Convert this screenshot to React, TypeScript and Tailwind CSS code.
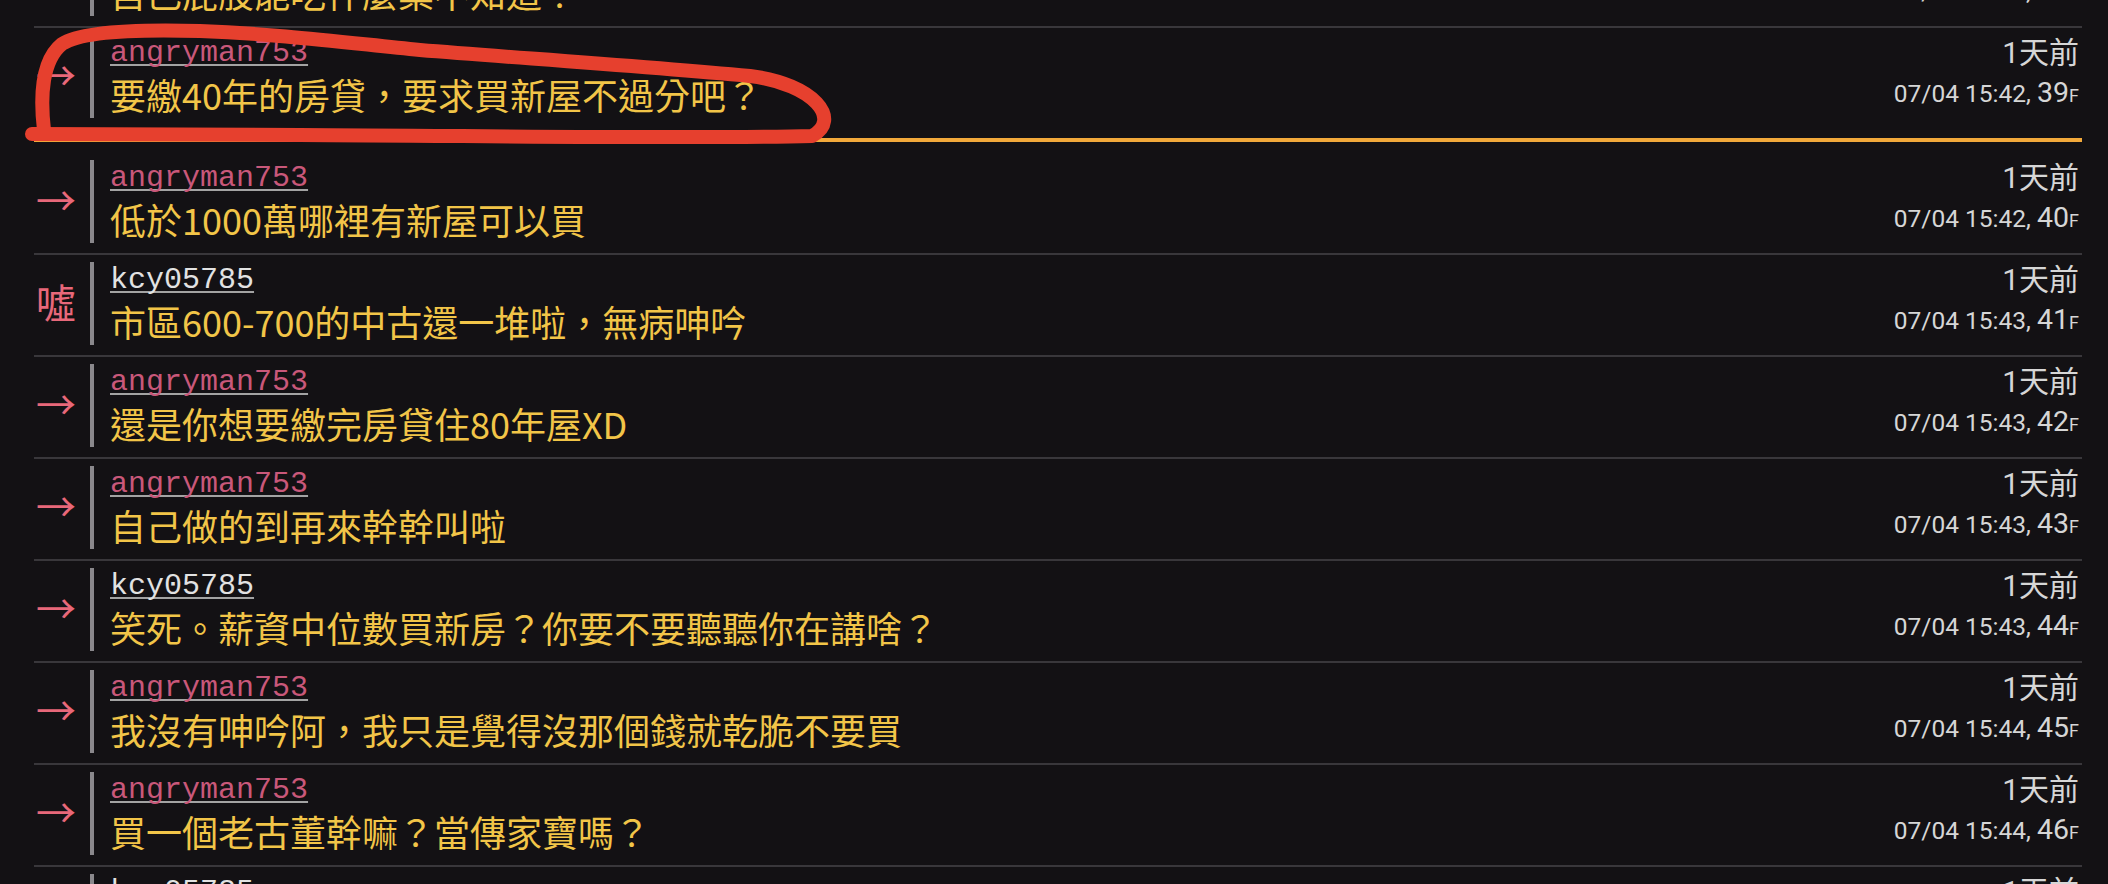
import React from 'react'

type Comment = {
  floor: number
  tag: '→' | '噓'
  user: string
  text: string
  time: string
}

const comments: Comment[] = [
  { floor: 38, tag: '→', user: 'angryman753', text: '自己屁股能吃什麼藥不知道？', time: '07/04 15:41' },
  { floor: 39, tag: '→', user: 'angryman753', text: '要繳40年的房貸，要求買新屋不過分吧？', time: '07/04 15:42' },
  { floor: 40, tag: '→', user: 'angryman753', text: '低於1000萬哪裡有新屋可以買', time: '07/04 15:42' },
  { floor: 41, tag: '噓', user: 'kcy05785', text: '市區600-700的中古還一堆啦，無病呻吟', time: '07/04 15:43' },
  { floor: 42, tag: '→', user: 'angryman753', text: '還是你想要繳完房貸住80年屋XD', time: '07/04 15:43' },
  { floor: 43, tag: '→', user: 'angryman753', text: '自己做的到再來幹幹叫啦', time: '07/04 15:43' },
  { floor: 44, tag: '→', user: 'kcy05785', text: '笑死。薪資中位數買新房？你要不要聽聽你在講啥？', time: '07/04 15:43' },
  { floor: 45, tag: '→', user: 'angryman753', text: '我沒有呻吟阿，我只是覺得沒那個錢就乾脆不要買', time: '07/04 15:44' },
  { floor: 46, tag: '→', user: 'angryman753', text: '買一個老古董幹嘛？當傳家寶嗎？', time: '07/04 15:44' },
  { floor: 47, tag: '→', user: 'kcy05785', text: '中古屋也是可以住啊', time: '07/04 15:45' },
]

// floor after which the "last read" marker is shown
const READ_MARK = 39

function CommentRow({ c, noBorder }: { c: Comment; noBorder?: boolean }) {
  const userColor = c.user === 'kcy05785' ? 'text-[#e2e2e2]' : 'text-[#c9587a]'
  return (
    <div className={noBorder ? '' : 'border-t-2 border-[#39373b]'}>
      <div className="flex h-[100px] items-start pt-[7px]">
        {/* push tag */}
        <div className="flex h-[83px] w-[44px] shrink-0 items-center justify-center pb-[6px] font-['Noto_Sans_CJK_TC',sans-serif] text-[40px] leading-[40px] text-[#e8687a]">
          {c.tag}
        </div>

        {/* user + message */}
        <div className="ml-[12px] min-w-0 flex-1 border-l-4 border-[#8a888c] pb-[4px] pl-4 pt-[1px]">
          <div className="h-[34px] whitespace-nowrap">
            <span
              className={`font-['Liberation_Mono',monospace] text-[30px] leading-[34px] underline decoration-[#a3a3a3] decoration-2 underline-offset-[3px] [text-decoration-skip-ink:none] ${userColor}`}
            >
              {c.user}
            </span>
          </div>
          <div className="mt-[4px] h-[40px] whitespace-nowrap font-['Noto_Sans_CJK_TC',sans-serif] text-[36px] leading-[40px] text-[#f2c548]">
            {c.text}
          </div>
        </div>

        {/* time + floor */}
        <div className="shrink-0 pr-[3px] text-right font-['Roboto','Noto_Sans_CJK_TC',sans-serif] text-[#d6d6d6]">
          <div className="h-[36px] text-[30px] leading-[36px]">1天前</div>
          <div className="mt-[7px] h-[30px] whitespace-nowrap text-[24.5px] leading-[30px]">
            {c.time},{' '}
            <span className="text-[28.5px]">{c.floor}</span>
            <span className="text-[18px]">F</span>
          </div>
        </div>
      </div>
    </div>
  )
}

export default function App() {
  return (
    <div className="relative h-[884px] w-[2108px] overflow-hidden bg-[#131114]">
      {/* Comment list, scrolled so floor 38 is cut at the top */}
      <div className="-mt-[76px] ml-[34px] w-[2048px]">
        {comments.map((c, i) => {
          const prev = comments[i - 1]
          const afterMark = prev && prev.floor === READ_MARK
          return (
            <React.Fragment key={c.floor}>
              {afterMark && <div className="mb-[11px] mt-[10px] h-[4px] bg-[#f2a93b]" />}
              <CommentRow c={c} noBorder={afterMark} />
            </React.Fragment>
          )
        })}
      </div>

      {/* Hand drawn annotation */}
      <svg
        className="pointer-events-none absolute left-0 top-0"
        width="2108"
        height="884"
        viewBox="0 0 2108 884"
        fill="none"
      >
        <path
          d="M44 130 C40 96 42 60 62 44 C80 32 130 29 200 31 C280 34 340 42 420 50 C520 58 640 66 750 76 C815 84 842 120 812 136 C700 139 500 136 300 135 C200 134 100 134 32 134"
          stroke="#e6402e"
          strokeWidth="14"
          strokeLinecap="round"
          strokeLinejoin="round"
        />
      </svg>
    </div>
  )
}
